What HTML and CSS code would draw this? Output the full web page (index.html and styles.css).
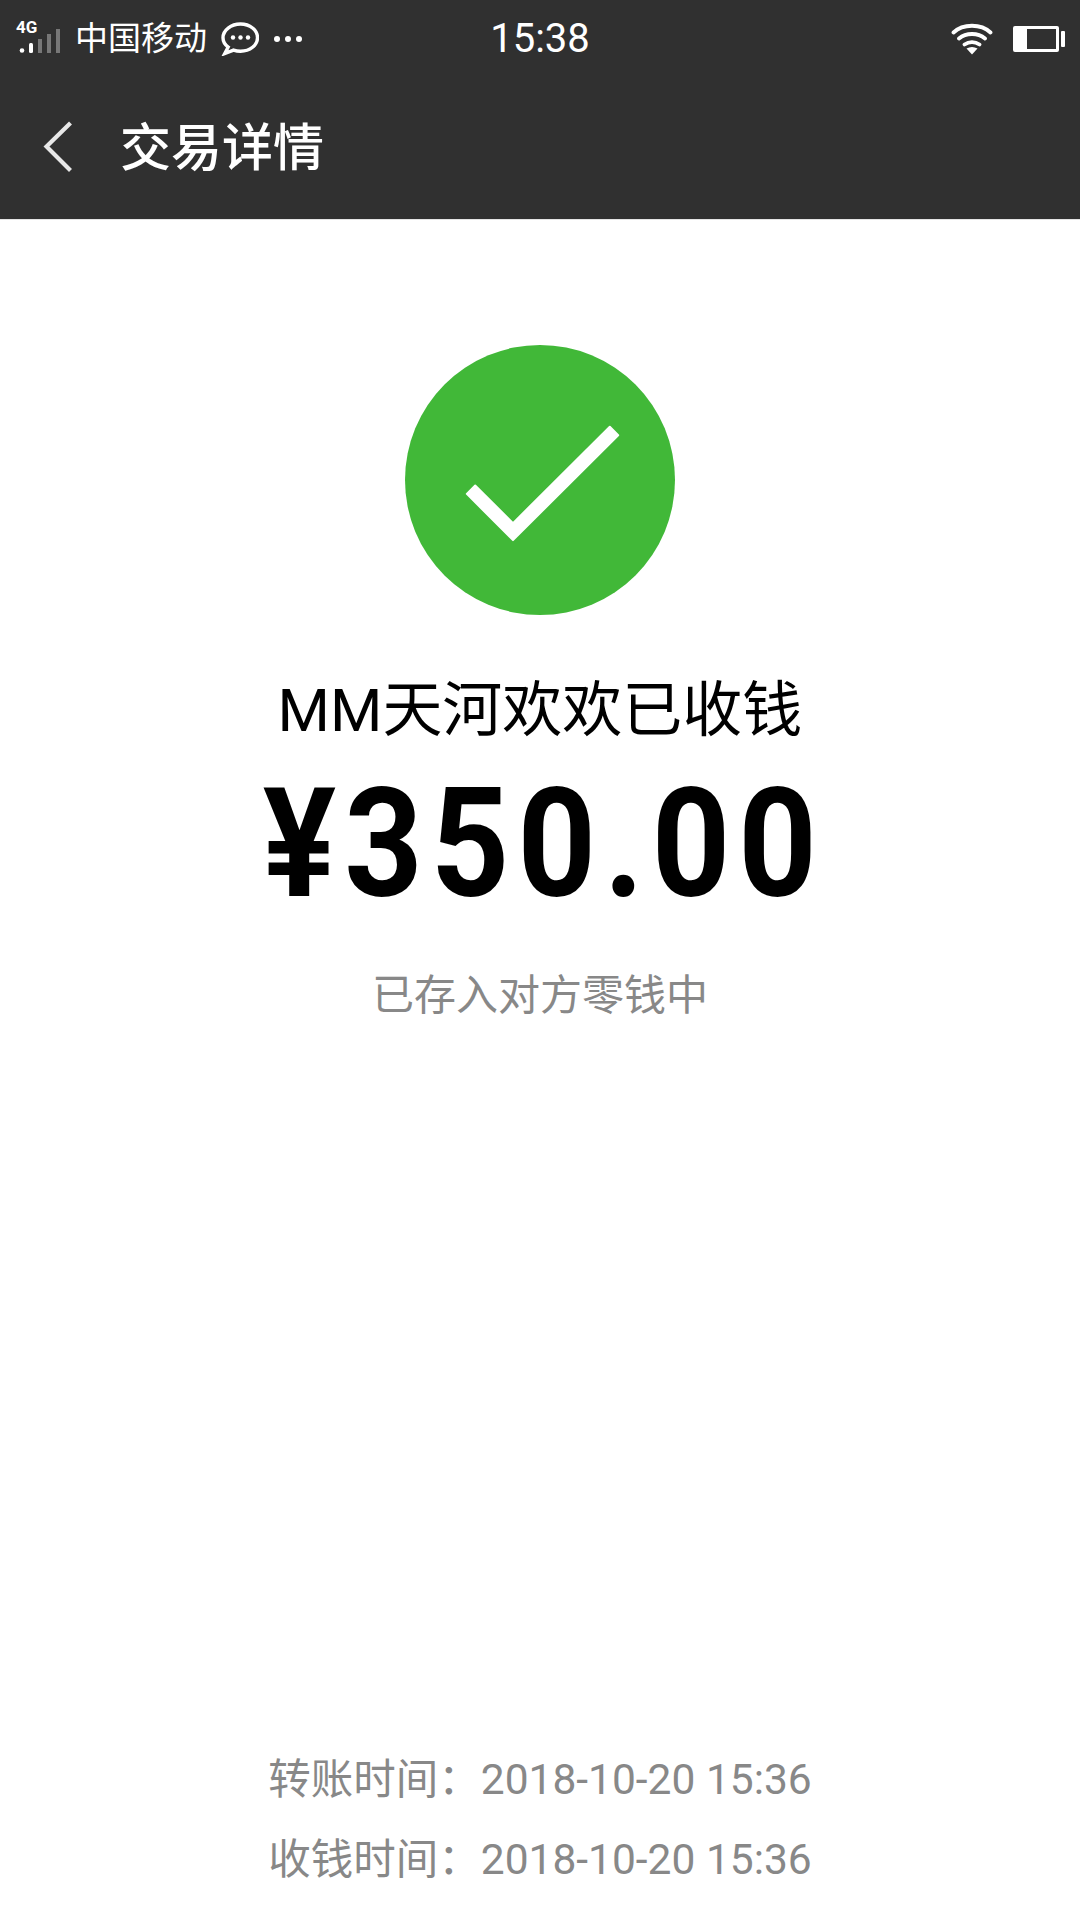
FILE: index.html
```html
<!DOCTYPE html>
<html lang="zh-CN">
<head>
<meta charset="UTF-8">
<title>交易详情</title>
<link rel="stylesheet" href="styles.css">
</head>
<body>
<div class="page">
    <div class="header">
        <div class="status-bar">
            <div class="status-left">
                <div class="signal">
                    <span class="net-type">4G</span>
                    <svg class="signal-bars" width="44" height="26" viewBox="0 0 44 26">
                        <circle cx="6" cy="21.500" r="2.300" fill="#fff"/>
                        <rect x="13" y="14" width="4" height="10" rx="1.500" fill="#fff"/>
                        <rect x="22" y="10" width="4" height="14" fill="#777"/>
                        <rect x="31" y="5" width="4" height="19" fill="#777"/>
                        <rect x="40" y="0" width="4" height="24" fill="#777"/>
                    </svg>
                </div>
                <span class="carrier">中国移动</span>
                <svg class="wechat" width="38" height="34" viewBox="0 0 38 34">
                    <path d="M19.500 2C10 2 2 8.200 2 15.700c0 3.800 2 7 5.200 9.400L3.800 31.500l8.700-3.400c2.200 .7 4.500 1.100 7 1.100 9.500 0 17-6 17-13.500S29 2 19.500 2z" fill="none" stroke="#fff" stroke-width="3.400"/>
                    <circle cx="12" cy="15.500" r="2.200" fill="#fff"/>
                    <circle cx="19.500" cy="15.500" r="2.200" fill="#fff"/>
                    <circle cx="27" cy="15.500" r="2.200" fill="#fff"/>
                </svg>
                <div class="more-dots"><i></i><i></i><i></i></div>
            </div>
            <span class="clock">15:38</span>
            <div class="status-right">
                <svg class="wifi" width="42" height="32" viewBox="0 0 42 32">
                    <path d="M2.500 9.500C12 .5 30 .5 39.500 9.500M8 15.500C15 9.500 27 9.500 34 15.500M13.500 21.500C18 18.500 24 18.500 28.500 21.500" fill="none" stroke="#fff" stroke-width="3.800" stroke-linecap="round"/>
                    <path d="M15.500 25.500Q21 22.500 26.500 25.500L21 31.500z" fill="#fff"/>
                </svg>
                <div class="battery">
                    <div class="battery-body"><div class="battery-level"></div></div>
                    <div class="battery-cap"></div>
                </div>
            </div>
        </div>
        <div class="toolbar">
            <svg class="back" width="32" height="54" viewBox="0 0 32 54">
                <path d="M27.500 3L3.500 26.500L27.500 50.500" fill="none" stroke="#e8e8e8" stroke-width="4.200"/>
            </svg>
            <h1 class="title">交易详情</h1>
        </div>
    </div>
    <div class="content">
        <div class="success-icon">
            <svg width="270" height="270" viewBox="0 0 270 270">
                <circle cx="135" cy="135" r="135" fill="#41b838"/>
                <polygon points="70.200,140.500 108,178.100 204.800,81.800 213.200,90.200 108,195.100 61.800,148.900" fill="#fff" stroke="#fff" stroke-width="2" stroke-linejoin="round"/>
            </svg>
        </div>
        <div class="payee">MM天河欢欢已收钱</div>
        <div class="amount">¥350.00</div>
        <div class="note">已存入对方零钱中</div>
        <div class="times">
            <div class="time-row">转账时间：2018-10-20 15:36</div>
            <div class="time-row">收钱时间：2018-10-20 15:36</div>
        </div>
    </div>
</div>
</body>
</html>
```

FILE: styles.css
```css
* {
    box-sizing: border-box;
}
body {
    margin: 0;
    background-color: #fff;
    font-family: Roboto, "Noto Sans CJK SC", sans-serif;
}
.page {
    display: flex;
    flex-direction: column;
    width: 1080px;
    height: 1920px;
    overflow: hidden;
}
.header {
    height: 220px;
    background-color: #303030;
    border-bottom: 1px solid #e4e4e4;
    color: #fff;
}
.status-bar {
    position: relative;
    display: flex;
    justify-content: space-between;
    align-items: center;
    height: 78px;
    padding: 0 15px 0 16px;
}
.status-left {
    display: flex;
    align-items: center;
}
.signal {
    position: relative;
    width: 45px;
    height: 34px;
    margin-top: -4px;
}
.net-type {
    position: absolute;
    left: 0;
    top: -3px;
    font-size: 17px;
    line-height: 20px;
    font-weight: 700;
}
.signal-bars {
    position: absolute;
    left: 0;
    top: 9px;
}
.carrier {
    margin-left: 14px;
    font-size: 33px;
    line-height: 40px;
}
.wechat {
    margin-left: 14px;
}
.more-dots {
    display: flex;
    gap: 5px;
    margin-left: 15px;
}
.more-dots i {
    display: block;
    width: 6px;
    height: 6px;
    border-radius: 50%;
    background-color: #fff;
}
.clock {
    position: absolute;
    left: 0;
    right: 0;
    text-align: center;
    font-size: 40px;
    line-height: 82px;
}
.status-right {
    display: flex;
    align-items: center;
    gap: 20px;
}
.battery {
    display: flex;
    align-items: center;
    gap: 2px;
}
.battery-body {
    width: 46px;
    height: 26px;
    border: 3px solid #fff;
    border-radius: 2px;
}
.battery-level {
    width: 11px;
    height: 100%;
    background-color: #fff;
}
.battery-cap {
    width: 4px;
    height: 16px;
    background-color: #fff;
    border-radius: 1px;
}
.toolbar {
    display: flex;
    align-items: center;
    height: 141px;
    padding: 0 0 0 43px;
}
.back {
    margin-top: -3px;
}
.title {
    margin: 0 0 0 45px;
    font-size: 51px;
    font-weight: 500;
    line-height: 60px;
}
.content {
    flex: 1;
    display: flex;
    flex-direction: column;
    align-items: center;
}
.success-icon {
    height: 270px;
    margin-top: 125px;
}
.payee {
    margin-top: 61px;
    font-size: 60px;
    line-height: 70px;
    color: #000;
}
.amount {
    margin-top: 13px;
    padding-left: 9px;
    font-size: 152px;
    line-height: 170px;
    font-weight: 700;
    letter-spacing: 9px;
    color: #000;
    transform: scaleX(0.9);
}
.note {
    margin-top: 42px;
    font-size: 42px;
    line-height: 50px;
    color: #888;
}
.times {
    margin-top: auto;
    padding-bottom: 20px;
}
.time-row {
    font-size: 42.500px;
    line-height: 80px;
    color: #888;
    text-align: center;
}
```
